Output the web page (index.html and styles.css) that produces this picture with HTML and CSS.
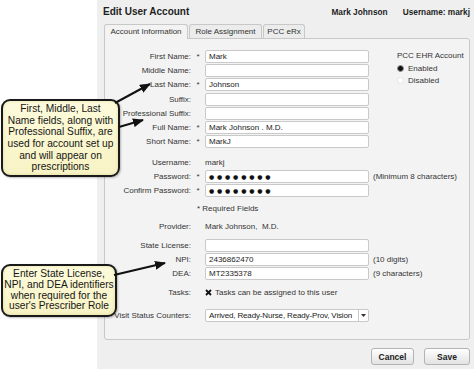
FILE: index.html
```html
<!DOCTYPE html>
<html>
<head>
<meta charset="utf-8">
<link rel="stylesheet" href="styles.css">
</head>
<body>
<div class="dialog">
  <div class="header">
    <div class="title">Edit User Account</div>
    <div class="who"><span>Mark Johnson</span><span>Username: markj</span></div>
  </div>
  <div class="tabs">
    <div class="tab active tab-acct">Account Information</div>
    <div class="tab tab-role">Role Assignment</div>
    <div class="tab tab-erx">PCC eRx</div>
  </div>
  <div class="panel">
    <div class="top">
      <div class="fields">
        <div class="row"><span class="label">First Name:</span><span class="star">*</span><span class="input">Mark</span></div>
        <div class="row"><span class="label">Middle Name:</span><span class="star"></span><span class="input"></span></div>
        <div class="row"><span class="label">Last Name:</span><span class="star">*</span><span class="input">Johnson</span></div>
        <div class="row"><span class="label">Suffix:</span><span class="star"></span><span class="input"></span></div>
        <div class="row"><span class="label">Professional Suffix:</span><span class="star"></span><span class="input"></span></div>
        <div class="row"><span class="label">Full Name:</span><span class="star">*</span><span class="input">Mark Johnson . M.D.</span></div>
        <div class="row"><span class="label">Short Name:</span><span class="star">*</span><span class="input">MarkJ</span></div>
      </div>
      <div class="ehr">
        <div class="ehr-title">PCC EHR Account</div>
        <div class="radio-row"><span class="radio on"></span>Enabled</div>
        <div class="radio-row"><span class="radio"></span>Disabled</div>
      </div>
    </div>
    <div class="row gap-md"><span class="label">Username:</span><span class="star"></span><span class="value">markj</span></div>
    <div class="row"><span class="label">Password:</span><span class="star">*</span><span class="input dots">●●●●●●●●</span><span class="hint">(Minimum 8 characters)</span></div>
    <div class="row"><span class="label">Confirm Password:</span><span class="star">*</span><span class="input dots">●●●●●●●●</span></div>
    <div class="row gap-sm"><span class="label"></span><span class="required">* Required Fields</span></div>
    <div class="row gap-sm"><span class="label">Provider:</span><span class="star"></span><span class="value">Mark Johnson,&nbsp; M.D.</span></div>
    <div class="row gap-sm"><span class="label">State License:</span><span class="star"></span><span class="input"></span></div>
    <div class="row"><span class="label">NPI:</span><span class="star"></span><span class="input">2436862470</span><span class="hint">(10 digits)</span></div>
    <div class="row"><span class="label">DEA:</span><span class="star"></span><span class="input">MT2335378</span><span class="hint">(9 characters)</span></div>
    <div class="row gap-md"><span class="label">Tasks:</span><span class="star"></span><span class="value check"><svg class="xbox" width="7" height="7" viewBox="0 0 7 7"><path d="M1 1 L6 6 M6 1 L1 6" stroke="#111" stroke-width="1.8"/></svg>Tasks can be assigned to this user</span></div>
    <div class="row gap-lg"><span class="label">Visit Status Counters:</span><span class="star"></span><span class="select"><span class="select-text">Arrived, Ready-Nurse, Ready-Prov, Vision</span><span class="select-btn"><svg width="5" height="3" viewBox="0 0 5 3"><path d="M0 0 L5 0 L2.5 3 z" fill="#333"/></svg></span></span></div>
  </div>
  <div class="actions">
    <button class="btn btn-cancel">Cancel</button>
    <button class="btn btn-save">Save</button>
  </div>
</div>

<div class="callout callout-names">First, Middle, Last<br>Name fields, along with<br>Professional Suffix, are<br>used for account set up<br>and will appear on<br>prescriptions</div>
<div class="callout callout-ids">Enter State License,<br>NPI, and DEA identifiers<br>when required for the<br>user's Prescriber Role</div>

<svg class="arrows" width="474" height="369" viewBox="0 0 474 369">
  <defs>
    <marker id="ah" markerUnits="userSpaceOnUse" markerWidth="11" markerHeight="9" refX="10" refY="4.5" orient="auto">
      <path d="M0 0 L11 4.5 L0 9 z" fill="#111"/>
    </marker>
  </defs>
  <line x1="115" y1="103" x2="150" y2="84" stroke="#111" stroke-width="2" marker-end="url(#ah)"/>
  <line x1="119" y1="127" x2="143" y2="120" stroke="#111" stroke-width="2" marker-end="url(#ah)"/>
  <line x1="114" y1="275" x2="165" y2="263" stroke="#111" stroke-width="2" marker-end="url(#ah)"/>
</svg>
</body>
</html>
```

FILE: styles.css
```css
* { box-sizing: border-box; }

html, body {
  margin: 0;
  padding: 0;
  background: #ffffff;
}

body {
  width: 474px;
  height: 369px;
  overflow: hidden;
  position: relative;
  font-family: "Liberation Sans", Arial, sans-serif;
  font-size: 8px;
  color: #2a2a2a;
}

.dialog {
  margin-left: 97px;
  height: 369px;
  background: #efefef;
  display: flex;
  flex-direction: column;
}

.header {
  height: 23px;
  display: flex;
  align-items: center;
  padding: 0 4px 0 6px;
}

.title {
  font-size: 10px;
  font-weight: bold;
  color: #1e1e1e;
}

.who {
  margin-left: auto;
  display: flex;
  gap: 15px;
  font-size: 8.3px;
  font-weight: bold;
  color: #1e1e1e;
}

.tabs {
  margin-top: 1px;
  margin-left: 7px;
  display: flex;
  align-items: flex-end;
  gap: 1px;
}

.tab {
  height: 14px;
  line-height: 13px;
  text-align: center;
  border: 1px solid #c8c8c8;
  border-bottom: none;
  border-radius: 3px 3px 0 0;
  background: #ececec;
  color: #333;
  font-size: 8px;
}

.tab.active {
  height: 15px;
  margin-bottom: -1px;
  background: #f3f3f3;
  position: relative;
  z-index: 1;
}

.tab-acct { width: 84px; }
.tab-role { width: 73px; }
.tab-erx { width: 42px; }

.panel {
  margin-left: 7px;
  width: 366px;
  height: 302px;
  border: 1px solid #c8c8c8;
  border-radius: 0 3px 3px 3px;
  background: #f3f3f3;
  padding-top: 11px;
}

.top {
  display: flex;
}

.ehr {
  padding-left: 28px;
  color: #333;
}

.ehr-title {
  height: 12px;
  line-height: 12px;
}

.radio-row {
  height: 12.5px;
  display: flex;
  align-items: center;
  gap: 4px;
}

.radio {
  width: 7px;
  height: 7px;
  border-radius: 50%;
  background: #ffffff;
  border: 1px solid #e6e6e6;
}

.radio.on {
  background: #111;
  border: 1px solid #9a9a9a;
}

.row {
  display: flex;
  align-items: center;
  height: 13px;
  margin-bottom: 1.2px;
}

.gap-sm { margin-top: 5.2px; }
.gap-md { margin-top: 6.3px; }
.gap-lg { margin-top: 10px; }

.label {
  width: 86px;
  text-align: right;
  color: #333;
  white-space: nowrap;
}

.star {
  width: 14px;
  text-align: center;
  color: #333;
}

.input {
  width: 164px;
  height: 13px;
  line-height: 11px;
  padding-left: 3px;
  background: #ffffff;
  border: 1px solid #c9c9c9;
  border-radius: 2px;
  color: #222;
  white-space: nowrap;
  overflow: hidden;
}

.dots {
  font-family: "DejaVu Sans", sans-serif;
  font-size: 6px;
  letter-spacing: 2.8px;
  color: #111;
}

.value {
  color: #333;
  white-space: nowrap;
}

.check {
  display: flex;
  align-items: center;
  gap: 3px;
}

.xbox {
  display: block;
}

.required {
  padding-left: 6px;
  color: #333;
}

.hint {
  margin-left: 4px;
  color: #333;
  white-space: nowrap;
}

.select {
  width: 164px;
  height: 13px;
  display: flex;
  background: #ffffff;
  border: 1px solid #c9c9c9;
  border-radius: 2px;
}

.select-text {
  flex: 1;
  padding-left: 3px;
  line-height: 11px;
  letter-spacing: -0.15px;
  white-space: nowrap;
  overflow: hidden;
  color: #222;
}

.select-btn {
  width: 10px;
  border-left: 1px solid #c9c9c9;
  display: flex;
  align-items: center;
  justify-content: center;
}

.actions {
  margin-top: 8px;
  display: flex;
  justify-content: flex-end;
  gap: 10px;
  padding-right: 4px;
}

.btn {
  height: 17px;
  padding: 0;
  border: 1px solid #b3b3b3;
  border-radius: 3px;
  background: linear-gradient(#fefefe, #e3e3e3);
  font-family: "Liberation Sans", Arial, sans-serif;
  font-size: 8.5px;
  font-weight: bold;
  color: #222;
}

.btn-cancel { width: 43px; }
.btn-save { width: 46px; }

.callout {
  position: absolute;
  left: 1px;
  border: 2px solid #1a1a1a;
  border-radius: 9px;
  background: linear-gradient(#fdfbdc, #f8f3c4);
  box-shadow: inset 0 0 3px rgba(200, 190, 110, 0.5), 1px 1px 2px rgba(0, 0, 0, 0.25);
  display: flex;
  align-items: center;
  justify-content: center;
  text-align: center;
  font-family: "Liberation Sans", Arial, sans-serif;
  font-size: 10.2px;
  line-height: 11.6px;
  color: #151515;
}

.callout-names {
  top: 99px;
  width: 119px;
  height: 78px;
}

.callout-ids {
  top: 264px;
  width: 116px;
  height: 53px;
  line-height: 10.8px;
}

.arrows {
  position: absolute;
  left: 0;
  top: 0;
  pointer-events: none;
}
```
